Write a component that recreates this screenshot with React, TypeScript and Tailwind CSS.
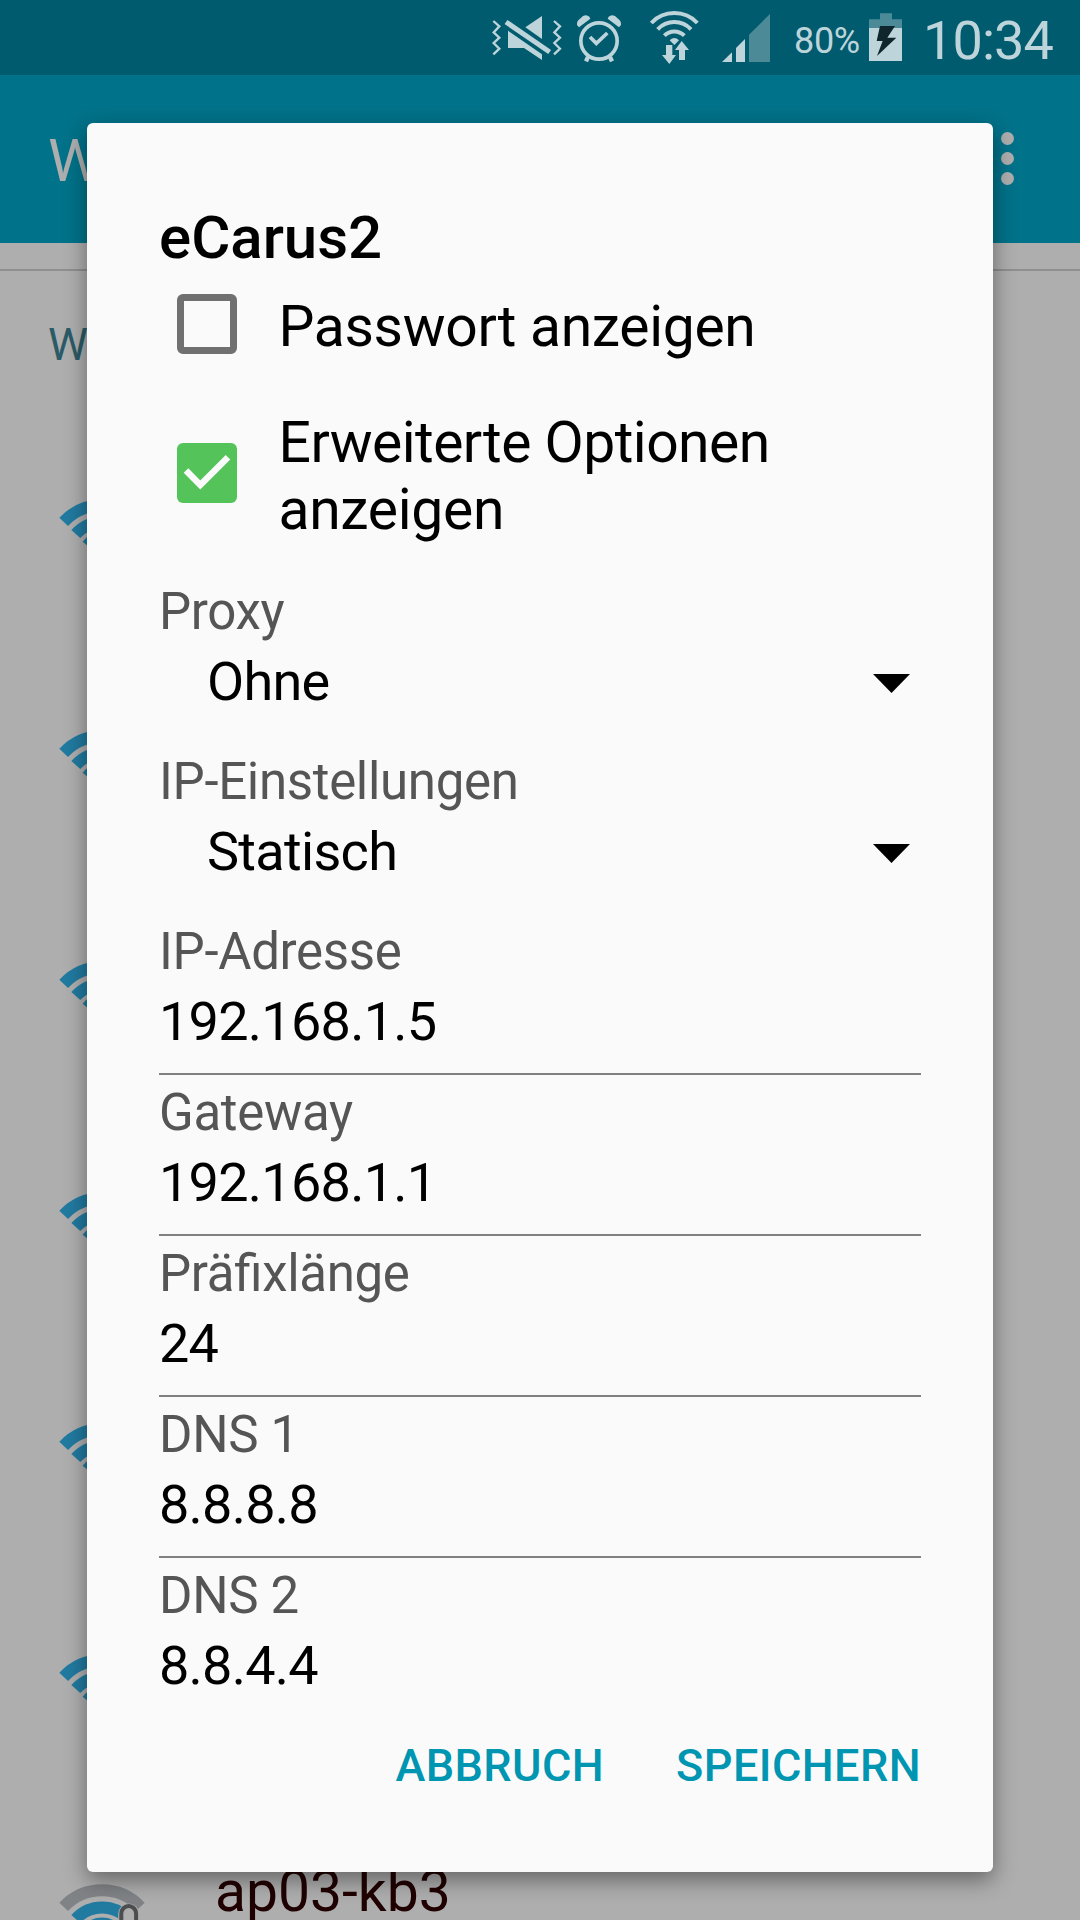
const LIGHT = '#bdd4db';
const FADED = '#4b8a96';

function MuteVibrateIcon() {
  return (
    <svg className="mt-3 h-[52px] w-[72px] shrink-0" viewBox="33 36 216 156" fill={LIGHT}>
      <g fill="none" stroke={LIGHT} strokeWidth="7">
        <path d="M40 63L58 79L41 97L58 113L41 129L58 146L40 163" />
        <path d="M222 63L240 79L223 97L240 113L223 129L240 146L222 163" />
      </g>
      <path d="M136 82L186 48V117Z" />
      <path d="M84 92L186 163V180L132 144H84Z" />
      <path d="M78 66L209 156" stroke={LIGHT} strokeWidth="15" />
    </svg>
  );
}

function AlarmIcon() {
  return (
    <svg className="mt-3 ml-3 h-[52px] w-[48px] shrink-0" viewBox="285 36 144 156" fill={LIGHT}>
      <path d="M297 82L291 75Q290 62 300 56L309 48Q320 42 328 50L331 56Z" />
      <path d="M417 82L423 75Q424 62 414 56L405 48Q394 42 386 50L383 56Z" />
      <g fill="none" stroke={LIGHT}>
        <circle cx="357" cy="123" r="54.5" strokeWidth="11" />
        <path d="M330 111L349 130L382 99" strokeWidth="11" />
        <path d="M324 171L318 184M390 171L396 184" strokeWidth="13" />
      </g>
    </svg>
  );
}

function WifiTransferIcon() {
  return (
    <svg className="mt-2 ml-[25px] h-[58px] w-[54px] shrink-0" viewBox="504 24 162 174" fill={LIGHT}>
      <g fill="none" stroke={LIGHT} strokeWidth="12">
        <path d="M514 69A95 95 0 0 1 652 69" />
        <path d="M533 88A68 68 0 0 1 633 88" />
        <path d="M553 107A42 42 0 0 1 613 107" />
      </g>
      <path d="M569 121Q583 107 597 121L583 135Z" />
      <g stroke="#015b6e" strokeWidth="4" paintOrder="stroke">
        <path d="M558 135H577V165H588L568 192L546 165H558Z" />
        <path d="M597 180V150H585L605 123L627 150H615V180Z" />
      </g>
    </svg>
  );
}

function SignalIcon() {
  return (
    <svg className="mt-3 ml-[18px] h-[52px] w-[54px] shrink-0" viewBox="720 36 162 156" fill={LIGHT}>
      <path d="M726 186L756 157V186Z" />
      <path d="M768 186V144L795 117V186Z" />
      <path d="M807 186V104L870 42V186Z" fill={FADED} />
    </svg>
  );
}

function BatteryIcon() {
  return (
    <svg className="mt-3 ml-[6px] h-[52px] w-[39px] shrink-0" viewBox="498 36 117 156">
      <path d="M540 40H576V58H606V84H507V58H540Z" fill={FADED} />
      <path d="M507 84H606V183H507Z" fill={LIGHT} />
      <path d="M540 78H585L562 113H589L531 168L548 123H530Z" fill="#10262d" />
    </svg>
  );
}

function NetworkIcon({ weak }: { weak?: boolean }) {
  return (
    <svg
      className={weak ? 'h-[66px] w-[92px] shrink-0' : 'mt-px h-[66px] w-[92px] shrink-0'}
      viewBox="56 1881 92 66"
      fill="none"
      strokeWidth="12"
    >
      <path d="M63.7 1906.800A52.700 52.700 0 0 1 140.3 1906.800" stroke={weak ? '#808386' : '#217aa0'} />
      <path d="M75.800 1919A35.500 35.500 0 0 1 128.200 1919" stroke="#217aa0" />
      <path d="M87.200 1930.500A19.300 19.300 0 0 1 116.800 1930.500" stroke="#217aa0" />
      {weak && (
        <>
          <path d="M128.7 1947V1914" stroke="#aeaeae" strokeWidth="21" strokeLinecap="round" />
          <path d="M121.3 1947V1913.500A7.400 7.400 0 0 1 136.1 1913.500V1947" stroke="#4c4d4e" strokeWidth="4" />
        </>
      )}
    </svg>
  );
}

function CheckRow({ lines, checked }: { lines: string[]; checked?: boolean }) {
  return (
    <label className="flex items-start pl-[18px]">
      {checked ? (
        <svg className="mt-[34px] size-[60px] shrink-0" viewBox="0 0 60 60">
          <rect width="60" height="60" rx="6" fill="#54c45a" />
          <path d="M9 27.500L23.300 42L51 14.300" fill="none" stroke="#fafafa" strokeWidth="6.500" />
        </svg>
      ) : (
        <span className="mt-px size-[60px] shrink-0 rounded-[6px] border-[7px] border-[#707070]" />
      )}
      <span className="ml-[41.500px] text-[57px] leading-[67px]">
        {lines.map((line) => (
          <span key={line} className={line.length > 18 ? 'block tracking-[-0.52px]' : 'block tracking-[-0.32px]'}>
            {line}
          </span>
        ))}
      </span>
    </label>
  );
}

function Label({ text }: { text: string }) {
  return (
    <div className="text-[51px] leading-[75px] tracking-[-0.32px] text-[#555555] [font-feature-settings:'liga'_1]">
      {text}
    </div>
  );
}

function SelectField({ label, value }: { label: string; value: string }) {
  return (
    <div className="h-[170px]">
      <Label text={label} />
      <div className="flex items-center justify-between pr-[11px] pl-12 text-[54px] leading-[65px] tracking-[-0.7px]">
        <span>{value}</span>
        <svg className="mt-[3px] h-[19px] w-[37px]" viewBox="0 0 37 19">
          <path d="M0 0H37L18.500 19Z" />
        </svg>
      </div>
    </div>
  );
}

function TextField({ label, value, last }: { label: string; value: string; last?: boolean }) {
  return (
    <div className={last ? 'h-[140px]' : 'h-[161px] border-b-2 border-[#808080]'}>
      <Label text={label} />
      <div className="text-[54px] leading-[65px] tracking-[-0.74px]">{value}</div>
    </div>
  );
}

const networks = ['', '', '', '', '', '', 'ap03-kb3'];

const addresses = [
  { label: 'IP-Adresse', value: '192.168.1.5' },
  { label: 'Gateway', value: '192.168.1.1' },
  { label: 'Präfixlänge', value: '24' },
  { label: 'DNS 1', value: '8.8.8.8' },
  { label: 'DNS 2', value: '8.8.4.4' },
];

export default function App() {
  return (
    <div className="relative flex h-[1920px] w-[1080px] flex-col overflow-hidden bg-[#aeaeae] font-['Roboto',sans-serif] text-black">
      <header className="flex h-[75px] shrink-0 items-start bg-[#015b6e] pl-[491px] whitespace-nowrap text-[#bdd4db]">
        <MuteVibrateIcon />
        <AlarmIcon />
        <WifiTransferIcon />
        <SignalIcon />
        <span className="ml-[20px] w-[66px] pt-[17px] text-[36px] leading-[48px] tracking-[-0.3px]">80%</span>
        <BatteryIcon />
        <span className="ml-[18px] text-[54px] leading-[81px] tracking-[-0.9px]">10:34</span>
      </header>

      <div className="flex h-[168px] shrink-0 items-center justify-between bg-[#007289] pr-[66px] pl-[48px]">
        <span className="mt-1 text-[60px] leading-[70px] text-[#aeaeae]">WLAN</span>
        <div className="-mt-px flex flex-col gap-[7px]">
          <i className="size-[13px] rounded-full bg-[#aeaeae]" />
          <i className="size-[13px] rounded-full bg-[#aeaeae]" />
          <i className="size-[13px] rounded-full bg-[#aeaeae]" />
        </div>
      </div>

      <div className="mt-[26px] h-[2px] shrink-0 bg-[#8f8f8f]" />
      <div className="h-[140px] shrink-0 pt-[44px] pl-[48px] text-[45px] leading-[60px] text-[#2b5b66]">WLAN</div>

      <div className="flex flex-col">
        {networks.map((name, i) => (
          <div key={i} className="flex h-[231px] shrink-0 items-start pt-[84px] pl-[56px]">
            <NetworkIcon weak={name !== ''} />
            <span className="-mt-[23px] ml-[67px] text-[57px] leading-[67px] text-[#200000]">{name}</span>
          </div>
        ))}
      </div>

      <div className="absolute top-[123px] left-[87px] flex h-[1749px] w-[906px] flex-col rounded-[6px] bg-[#fafafa] px-[72px] pt-[80px] shadow-[0_8px_22px_rgba(0,0,0,0.42)]">
        <h1 className="h-[90px] text-[60px] leading-[70px] font-medium">eCarus2</h1>
        <div className="h-[116px]">
          <CheckRow lines={['Passwort anzeigen']} />
        </div>
        <div className="h-[165px]">
          <CheckRow lines={['Erweiterte Optionen', 'anzeigen']} checked />
        </div>
        <SelectField label="Proxy" value="Ohne" />
        <SelectField label="IP-Einstellungen" value="Statisch" />
        {addresses.map((a, i) => (
          <TextField key={a.label} label={a.label} value={a.value} last={i === addresses.length - 1} />
        ))}
        <div className="mt-[41px] flex justify-end gap-[72px] text-[45px] leading-[54px] font-medium text-[#0095b1]">
          <button className="tracking-[0.42px]">ABBRUCH</button>
          <button className="tracking-[0.42px]">SPEICHERN</button>
        </div>
      </div>
    </div>
  );
}
